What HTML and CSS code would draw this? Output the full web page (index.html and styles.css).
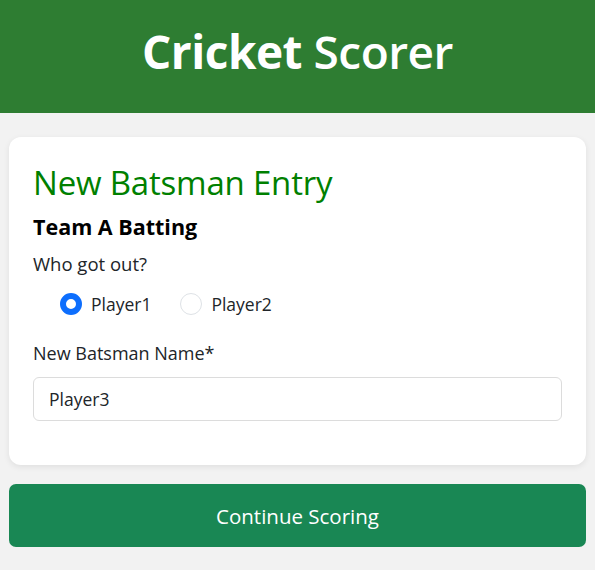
FILE: index.html
```html
<!DOCTYPE html>
<html lang="en">
<head>
<meta charset="utf-8">
<title>Cricket Scorer</title>
<link rel="stylesheet" href="styles.css">
</head>
<body>
<header class="app-header">
  <h1 class="app-title"><span class="title-strong">Cricket</span> <span class="title-light">Scorer</span></h1>
</header>
<main class="content">
  <section class="card">
    <h2 class="card-title">New Batsman Entry</h2>
    <h3 class="team-title">Team A Batting</h3>
    <p class="question">Who got out?</p>
    <div class="radio-row">
      <label class="radio-option"><input type="radio" name="out" class="radio" checked> <span>Player1</span></label>
      <label class="radio-option"><input type="radio" name="out" class="radio"> <span>Player2</span></label>
    </div>
    <label class="field-label" for="newBat">New Batsman Name*</label>
    <input id="newBat" class="text-input" type="text" value="Player3">
  </section>
  <button class="primary-btn" type="button">Continue Scoring</button>
</main>
</body>
</html>
```
FILE: styles.css
```css
* { box-sizing: border-box; }
html, body { margin: 0; padding: 0; }
body {
  background: #f2f2f2;
  font-family: "Open Sans", "Noto Sans", "Liberation Sans", sans-serif;
  color: #212529;
  width: 595px;
  height: 570px;
  overflow: hidden;
}
.app-header {
  background: #2e7d32;
  height: 113px;
  padding-bottom: 12px;
  display: flex;
  align-items: center;
  justify-content: center;
}
.app-title {
  margin: 0;
  color: #fff;
  font-size: 46px;
  line-height: 1;
  letter-spacing: -0.5px;
}
.title-strong { font-weight: 700; }
.title-light { font-weight: 600; }
.content {
  padding: 24px 9px 0;
  display: flex;
  flex-direction: column;
  gap: 19px;
}
.card {
  background: #fff;
  border-radius: 12px;
  box-shadow: 0 2px 6px rgba(0,0,0,0.08);
  padding: 27px 24px 44px;
  display: flex;
  flex-direction: column;
}
.card-title {
  margin: 0;
  color: #008000;
  font-size: 33px;
  font-weight: 400;
  line-height: 38px;
  letter-spacing: -0.2px;
}
.team-title {
  margin: 11px 0 0;
  font-size: 21.5px;
  font-weight: 700;
  line-height: 28px;
  color: #000;
}
.question {
  margin: 11px 0 0;
  font-size: 18.5px;
  line-height: 24px;
}
.radio-row {
  margin-top: 16px;
  padding-left: 27px;
  display: flex;
  align-items: center;
  gap: 29px;
  height: 24px;
}
.radio-option {
  display: flex;
  align-items: center;
  gap: 9px;
  font-size: 17.5px;
}
.radio {
  appearance: none;
  -webkit-appearance: none;
  margin: 0;
  width: 22px;
  height: 22px;
  border-radius: 50%;
  border: 1px solid #dee2e6;
  background: #fff;
}
.radio:checked {
  background: #fff;
  border: 6.5px solid #0d6efd;
}
.field-label {
  margin-top: 25px;
  font-size: 18px;
  line-height: 24px;
}
.text-input {
  margin-top: 12px;
  height: 44px;
  width: 100%;
  border: 1px solid #dcdcdc;
  border-radius: 6px;
  padding: 0 15px;
  font-family: inherit;
  font-size: 17.5px;
  color: #212529;
  background: #fff;
  outline: none;
}
.primary-btn {
  height: 63px;
  width: 100%;
  border: none;
  border-radius: 7px;
  background: #198754;
  color: #fff;
  font-family: inherit;
  font-size: 20.5px;
  cursor: pointer;
}
```
